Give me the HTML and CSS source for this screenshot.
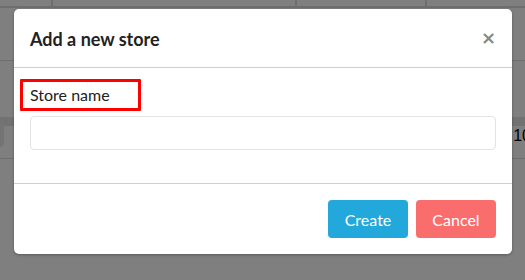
FILE: index.html
```html
<!DOCTYPE html>
<html>
<head>
    <meta charset="utf-8">
    <title>Add a new store</title>
    <link rel="stylesheet" href="styles.css">
</head>
<body>
    <!-- page behind the dialog -->
    <div class="page">
        <div class="toprow">
            <div class="cell c1"></div>
            <div class="cell c2"></div>
            <div class="cell c3"></div>
            <div class="cell c4"></div>
        </div>
        <div class="band"></div>
        <div class="thead"></div>
        <div class="trow">
            <span class="lbox"></span>
            <span class="num">10</span>
        </div>
    </div>

    <div class="overlay">
        <div class="modal">
            <div class="modal-header">
                <h4 class="modal-title">Add a new store</h4>
                <span class="close">&times;</span>
            </div>
            <div class="modal-body">
                <label class="field-label" for="storeName">Store name</label>
                <input type="text" id="storeName" class="field">
            </div>
            <div class="modal-footer">
                <button class="btn create">Create</button>
                <button class="btn cancel">Cancel</button>
            </div>
        </div>
    </div>
</body>
</html>
```

FILE: styles.css
```css
body { margin: 0; font-family: "Lato", "Open Sans", sans-serif; background-color: white; width: 525px; height: 280px; overflow: hidden; position: relative }

.page { height: 280px }
.toprow { display: flex; height: 6px; border-bottom: 2px solid #dcdcdc }
.cell { border-right: 2px solid #dcdcdc }
.c1 { width: 51px }
.c2 { width: 242px }
.c3 { width: 128px }
.c4 { flex: 1; border-right: none }
.band { height: 52px; border-bottom: 1px solid #dcdcdc }
.thead { height: 56px; border-bottom: 9px solid #e4e4e4 }
.trow { height: 32px; border-bottom: 1px solid #dcdcdc; display: flex; justify-content: space-between; align-items: center }
.lbox { width: 4px; height: 26px; margin-top: -16px; background-color: #e8e8e8; border-radius: 0 4px 4px 0 }
.num { font-family: "Liberation Sans", sans-serif; font-size: 16px; color: #000; margin-right: -6px; margin-top: -12px }

.overlay { position: absolute; left: 0; top: 0; width: 525px; height: 280px; background-color: rgba(0, 0, 0, 0.5); padding-top: 9px; padding-left: 14px; box-sizing: border-box }
.modal { width: 498px; background-color: white; border-radius: 5px; box-shadow: 0 1px 3px rgba(0,0,0,0.3) }

.modal-header { height: 58px; padding: 0 16px; display: flex; align-items: center; justify-content: space-between; border-bottom: 1px solid #cfcfcf }
.modal-title { margin: 0; font-size: 18px; font-weight: 700; color: #222; padding-top: 2px }
.close { font-family: "DejaVu Sans", sans-serif; font-size: 18px; color: #888; font-weight: bold; margin-right: 0px; margin-top: -2px }

.modal-body { padding: 11px 16px 33px 16px; display: flex; flex-direction: column; align-items: flex-start }
.field-label { display: inline-block; margin-left: -10px; padding: 3px 28px 3px 7px; border: 3px solid #ff0000; font-size: 16px; color: #222; line-height: 20px; border-radius: 1px }
.field { margin-top: 5px; width: 466px; height: 34px; box-sizing: border-box; border: 1px solid #e3e3e3; border-radius: 4px }

.modal-footer { border-top: 1px solid #cfcfcf; padding: 16px 16px 16px 16px; display: flex; justify-content: flex-end; gap: 8px }
.btn { width: 80px; height: 38px; border: none; border-radius: 4px; color: white; font-family: "Lato", "Open Sans", sans-serif; font-size: 16px }
.create { background-color: #22a8da }
.cancel { background-color: #f96d6d }
```
